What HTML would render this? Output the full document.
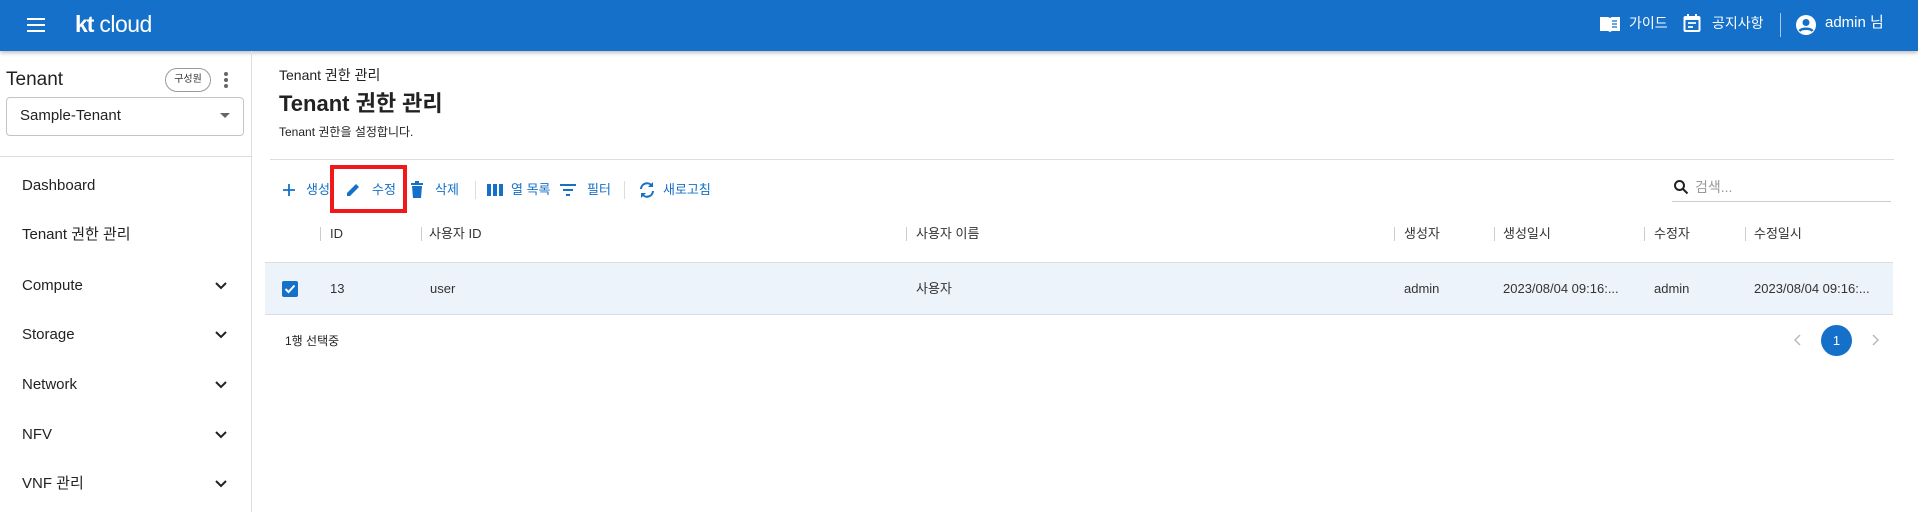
<!DOCTYPE html>
<html><head><meta charset="utf-8"><style>
*{margin:0;padding:0;box-sizing:border-box}
body{width:1918px;height:512px;overflow:hidden;background:#fff;font-family:"Liberation Sans","Noto Sans CJK KR",sans-serif;color:#222;position:relative}
.a{position:absolute;white-space:nowrap;line-height:18px}
.hdr{left:0;top:0;width:1918px;height:51px;background:#1470c8;box-shadow:0 2px 4px rgba(0,0,0,.25)}
.w{color:#fff;font-size:14px}
.side{left:0;top:51px;width:252px;height:461px;border-right:1px solid #ddd}
.mi{left:22px;font-size:15px;color:#222}
.chev{left:214px}
.tb{font-size:13px;color:#1470c8;top:181px}
.th{font-size:13px;color:#333;top:225px}
.sep{width:1px;height:14px;background:#ccc;top:227px}
.td{font-size:13px;color:#333;top:280px}
</style></head><body>
<div class="a hdr"></div>
<svg class="a" style="left:26px;top:15px" width="22" height="20"><rect x="1" y="3" width="18" height="2" fill="#fff"/><rect x="1" y="9" width="18" height="2" fill="#fff"/><rect x="1" y="15" width="18" height="2" fill="#fff"/></svg>
<div class="a" style="left:75px;top:11px;color:#fff;font-size:23px;line-height:26px;letter-spacing:-0.5px"><b style="letter-spacing:-1px">kt</b> cloud</div>
<svg class="a" style="left:1599px;top:15px" width="22" height="18"><path d="M1 2h8l2 1 2-1h8v14h-8l-2 1-2-1H1z" fill="#fff"/><path d="M13 6h5M13 9h5M13 12h5" stroke="#1470c8" stroke-width="1.2"/></svg>
<div class="a w" style="left:1629px;top:14px">가이드</div>
<svg class="a" style="left:1683px;top:13px" width="18" height="20"><rect x="1.5" y="4" width="15" height="14" rx="1" fill="none" stroke="#fff" stroke-width="2"/><rect x="1.5" y="4" width="15" height="3" fill="#fff"/><path d="M5 1v4M13 1v4" stroke="#fff" stroke-width="2"/><path d="M5 10h8M5 14h5" stroke="#fff" stroke-width="1.8"/></svg>
<div class="a w" style="left:1712px;top:14px">공지사항</div>
<div class="a" style="left:1780px;top:13px;width:1px;height:24px;background:#a8c8ee"></div>
<svg class="a" style="left:1795px;top:14px" width="22" height="22"><circle cx="11" cy="11" r="10" fill="#fff"/><circle cx="11" cy="8.5" r="3.5" fill="#1470c8"/><path d="M4.5 17c2-3 11-3 13 0" stroke="#1470c8" stroke-width="2.5" fill="none"/></svg>
<div class="a w" style="left:1825px;top:14px;font-size:15px">admin 님</div>

<div class="a side"></div>
<div class="a" style="left:6px;top:68px;font-size:19px;line-height:24px;color:#222">Tenant</div>
<div class="a" style="left:165px;top:68px;width:46px;height:24px;border:1px solid #999;border-radius:12px;font-size:10px;text-align:center;line-height:22px;color:#333">구성원</div>
<svg class="a" style="left:222px;top:70px" width="8" height="20"><circle cx="4" cy="4" r="2" fill="#666"/><circle cx="4" cy="10" r="2" fill="#666"/><circle cx="4" cy="16" r="2" fill="#666"/></svg>
<div class="a" style="left:6px;top:97px;width:238px;height:39px;border:1px solid #c4c4c4;border-radius:4px"></div>
<div class="a" style="left:20px;top:107px;font-size:15px;color:#222">Sample-Tenant</div>
<svg class="a" style="left:219px;top:112px" width="12" height="8"><path d="M1 1h10L6 6z" fill="#666"/></svg>
<div class="a" style="left:0;top:156px;width:252px;height:1px;background:#ddd"></div>
<div class="a mi" style="top:177px">Dashboard</div>
<div class="a mi" style="top:226px">Tenant 권한 관리</div>
<div class="a mi" style="top:277px">Compute</div>
<div class="a mi" style="top:326px">Storage</div>
<div class="a mi" style="top:376px">Network</div>
<div class="a mi" style="top:426px">NFV</div>
<div class="a mi" style="top:475px">VNF 관리</div>
<svg class="a chev" style="top:281px" width="14" height="10"><path d="M2 2l5 5 5-5" stroke="#222" stroke-width="2" fill="none"/></svg>
<svg class="a chev" style="top:330px" width="14" height="10"><path d="M2 2l5 5 5-5" stroke="#222" stroke-width="2" fill="none"/></svg>
<svg class="a chev" style="top:380px" width="14" height="10"><path d="M2 2l5 5 5-5" stroke="#222" stroke-width="2" fill="none"/></svg>
<svg class="a chev" style="top:430px" width="14" height="10"><path d="M2 2l5 5 5-5" stroke="#222" stroke-width="2" fill="none"/></svg>
<svg class="a chev" style="top:479px" width="14" height="10"><path d="M2 2l5 5 5-5" stroke="#222" stroke-width="2" fill="none"/></svg>

<div class="a" style="left:279px;top:66px;font-size:14px;color:#222">Tenant 권한 관리</div>
<div class="a" style="left:279px;top:91px;font-size:22px;line-height:26px;font-weight:bold;color:#222">Tenant 권한 관리</div>
<div class="a" style="left:279px;top:123px;font-size:12px;color:#222">Tenant 권한을 설정합니다.</div>
<div class="a" style="left:270px;top:159px;width:1624px;height:1px;background:#ddd"></div>

<svg class="a" style="left:282px;top:183px" width="14" height="14"><path d="M7 1v12M1 7h12" stroke="#1470c8" stroke-width="1.8"/></svg>
<div class="a tb" style="left:306px">생성</div>
<div class="a" style="left:330px;top:165px;width:77px;height:48px;border:4px solid #f01818"></div>
<svg class="a" style="left:345px;top:182px" width="16" height="16"><path d="M2 14v-3L11 2l3 3-9 9z" fill="#1470c8"/></svg>
<div class="a tb" style="left:372px">수정</div>
<svg class="a" style="left:410px;top:181px" width="14" height="18"><path d="M1 3h12M5 1h4" stroke="#1470c8" stroke-width="2"/><path d="M2 5h10l-1 12H3z" fill="#1470c8"/></svg>
<div class="a tb" style="left:435px">삭제</div>
<div class="a" style="left:475px;top:181px;width:1px;height:18px;background:#ddd"></div>
<svg class="a" style="left:487px;top:184px" width="16" height="12"><rect x="0" y="0" width="4" height="12" fill="#1470c8"/><rect x="6" y="0" width="4" height="12" fill="#1470c8"/><rect x="12" y="0" width="4" height="12" fill="#1470c8"/></svg>
<div class="a tb" style="left:511px">열 목록</div>
<svg class="a" style="left:559px;top:183px" width="18" height="14"><path d="M1 2h16M4 7h10M7 12h4" stroke="#1470c8" stroke-width="2"/></svg>
<div class="a tb" style="left:587px">필터</div>
<div class="a" style="left:624px;top:181px;width:1px;height:18px;background:#ddd"></div>
<svg class="a" style="left:638px;top:181px" width="18" height="18"><path d="M3 8a6 6 0 0 1 11-3M15 10a6 6 0 0 1-11 3" stroke="#1470c8" stroke-width="2" fill="none"/><path d="M15 1v5h-5z" fill="#1470c8"/><path d="M3 17v-5h5z" fill="#1470c8"/></svg>
<div class="a tb" style="left:663px">새로고침</div>

<svg class="a" style="left:1673px;top:179px" width="16" height="16"><circle cx="6.5" cy="6.5" r="4.5" stroke="#222" stroke-width="2" fill="none"/><path d="M10 10l4.5 4.5" stroke="#222" stroke-width="2"/></svg>
<div class="a" style="left:1695px;top:178px;font-size:14px;color:#999">검색...</div>
<div class="a" style="left:1672px;top:201px;width:219px;height:1px;background:#ccc"></div>

<div class="a sep" style="left:320px"></div><div class="a th" style="left:330px">ID</div>
<div class="a sep" style="left:421px"></div><div class="a th" style="left:429px">사용자 ID</div>
<div class="a sep" style="left:906px"></div><div class="a th" style="left:916px">사용자 이름</div>
<div class="a sep" style="left:1394px"></div><div class="a th" style="left:1404px">생성자</div>
<div class="a sep" style="left:1494px"></div><div class="a th" style="left:1503px">생성일시</div>
<div class="a sep" style="left:1644px"></div><div class="a th" style="left:1654px">수정자</div>
<div class="a sep" style="left:1745px"></div><div class="a th" style="left:1754px">수정일시</div>

<div class="a" style="left:265px;top:262px;width:1628px;height:53px;background:#edf3fb;border-top:1px solid #ddd;border-bottom:1px solid #ddd"></div>
<svg class="a" style="left:282px;top:281px" width="16" height="16"><rect width="16" height="16" rx="2" fill="#1470c8"/><path d="M3.5 8l3 3 6-6.5" stroke="#fff" stroke-width="2" fill="none"/></svg>
<div class="a td" style="left:330px">13</div>
<div class="a td" style="left:430px">user</div>
<div class="a td" style="left:916px">사용자</div>
<div class="a td" style="left:1404px">admin</div>
<div class="a td" style="left:1503px">2023/08/04 09:16:...</div>
<div class="a td" style="left:1654px">admin</div>
<div class="a td" style="left:1754px">2023/08/04 09:16:...</div>

<div class="a" style="left:285px;top:332px;font-size:12px;color:#222">1행 선택중</div>
<svg class="a" style="left:1793px;top:334px" width="10" height="12"><path d="M7 1L2 6l5 5" stroke="#bbb" stroke-width="1.5" fill="none"/></svg>
<div class="a" style="left:1821px;top:325px;width:31px;height:31px;border-radius:50%;background:#1470c8;color:#fff;font-size:13px;text-align:center;line-height:31px">1</div>
<svg class="a" style="left:1870px;top:334px" width="10" height="12"><path d="M3 1l5 5-5 5" stroke="#bbb" stroke-width="1.5" fill="none"/></svg>
</body></html>
